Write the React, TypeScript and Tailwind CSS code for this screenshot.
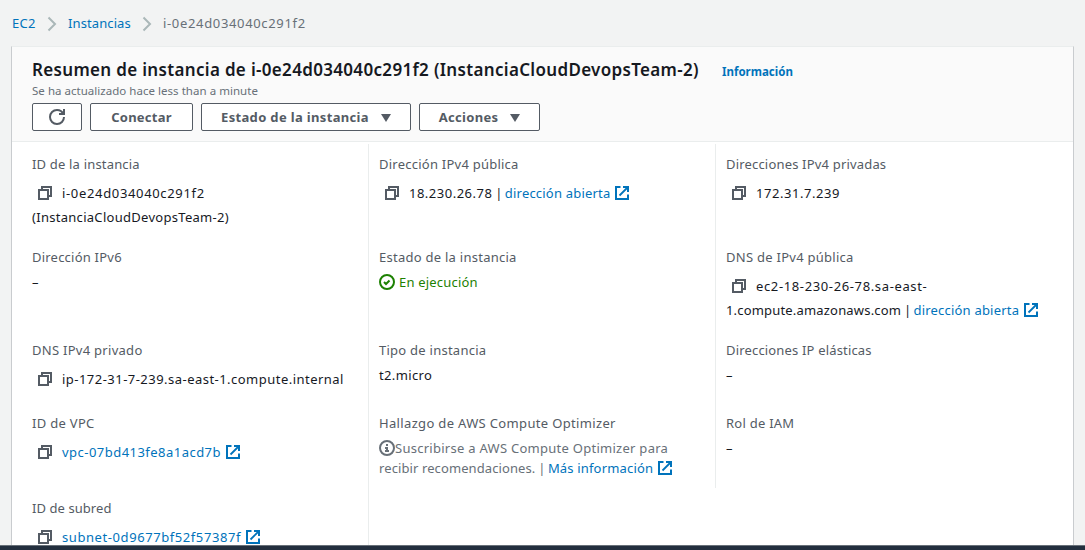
import type { ReactNode } from "react";

function CopyIcon() {
  return (
    <svg viewBox="0 0 16 16" className="ml-[5px] mr-[9px] inline-block size-4 align-[-3px]" fill="none" stroke="#545b64" strokeWidth="2">
      <path d="M2 5h9v9H2z" />
      <path d="M5 5V2h9v9h-3" />
    </svg>
  );
}

function ExternalIcon() {
  return (
    <svg viewBox="0 0 16 16" className="ml-1 inline-block size-4 align-[-3px]" fill="none" stroke="#0073bb" strokeWidth="2">
      <path d="M9 2h5v5" />
      <path d="M5.500 10.500L14 2" strokeWidth="1.800" />
      <path d="M14 9.500V14H2V2h4.500" />
    </svg>
  );
}

function Chevron() {
  return (
    <svg viewBox="0 0 10 16" className="h-4 w-2.5" fill="none" stroke="#aab7b8" strokeWidth="2">
      <path d="M1.5 1.5L8 8l-6.500 6.500" />
    </svg>
  );
}

function Caret() {
  return (
    <svg viewBox="0 0 10 8" className="h-2 w-2.5" fill="#545b64">
      <path d="M0 0h10L5 8z" />
    </svg>
  );
}

function Pipe() {
  return <span className="tracking-[-0.5px]"> | </span>;
}

function Button({ className, children }: { className: string; children: ReactNode }) {
  return (
    <button className={`flex h-7 items-center justify-center rounded-[2px] border border-[#545b64] bg-white text-[13px] font-bold text-[#545b64] ${className}`}>
      {children}
    </button>
  );
}

function Cell({ label, labelClass, divider = true, children }: { label: string; labelClass: string; divider?: boolean; children?: ReactNode }) {
  return (
    <div className={`pl-[10px] pt-[9px] ${divider ? "border-r border-[#eaeded]" : ""}`}>
      <div className={`leading-[22px] text-[#545b64] ${labelClass}`}>{label}</div>
      {children}
    </div>
  );
}

function Lines({ children }: { children: ReactNode }) {
  return <div className="mt-[6px] leading-6">{children}</div>;
}

function Plain({ children }: { children: ReactNode }) {
  return <div className="mt-1 leading-5">{children}</div>;
}

export default function App() {
  return (
    <div className="flex h-[550px] w-[1085px] flex-col overflow-hidden bg-[#f2f3f3] font-['Noto_Sans',sans-serif] text-[13px] whitespace-nowrap text-[#16191f]">
      <nav className="flex h-[46px] shrink-0 items-center pl-3 pt-px text-[#0073bb]">
        <a className="w-[35px] tracking-[0.3px]">EC2</a>
        <Chevron />
        <a className="ml-[11px] w-[74px] tracking-[0.1px]">Instancias</a>
        <Chevron />
        <span className="ml-[11px] tracking-[0.66px] text-[#687078]">i-0e24d034040c291f2</span>
      </nav>

      <main className="ml-[11px] flex min-h-0 w-[1063px] flex-1 flex-col overflow-hidden border border-b-0 border-t-[#eaeded] border-r-[#c9cccf] border-l-[#c9cccf] bg-white">
        <header className="h-[95px] shrink-0 border-b border-[#eaeded] bg-[#fafafa] pl-5 pt-[11px]">
          <div className="flex h-6 items-center">
            <h1 className="w-[690px] text-[17px] font-semibold tracking-[0.325px]">Resumen de instancia de i-0e24d034040c291f2 (InstanciaCloudDevopsTeam-2)</h1>
            <a className="pt-1 text-[11.5px] font-bold text-[#0073bb]">Información</a>
          </div>
          <p className="text-[11.5px] leading-[18px] tracking-[0.03px] text-[#687078]">Se ha actualizado hace less than a minute</p>
          <div className="mt-[3px] flex gap-2">
            <Button className="w-[50px]">
              <svg viewBox="0 0 16 16" className="size-4" fill="none" stroke="#545b64" strokeWidth="2">
                <path d="M10 5h5V0" />
                <path d="M15 8a6.957 6.957 0 0 1-7 7 6.957 6.957 0 0 1-7-7 6.957 6.957 0 0 1 7-7 6.870 6.870 0 0 1 6.300 4" />
              </svg>
            </Button>
            <Button className="w-[103px] pt-px tracking-[0.25px]">Conectar</Button>
            <Button className="w-[210px] gap-3 pt-px tracking-[0.34px]">Estado de la instancia<Caret /></Button>
            <Button className="w-[121px] gap-3 pt-px tracking-[0.3px]">Acciones<Caret /></Button>
          </div>
        </header>

        <section className="mt-0.5 grid shrink-0 grid-cols-[347px_347px_1fr] grid-rows-[93px_93px_73px_85px_93px] pl-[10px]">
          <Cell label="ID de la instancia" labelClass="tracking-[0.18px]">
            <Lines>
              <CopyIcon /><span className="tracking-[0.66px]">i-0e24d034040c291f2</span>
              <div className="tracking-[0.29px]">(InstanciaCloudDevopsTeam-2)</div>
            </Lines>
          </Cell>
          <Cell label="Dirección IPv4 pública" labelClass="tracking-[0.24px]">
            <Lines>
              <CopyIcon /><span className="tracking-[0.5px]">18.230.26.78</span><Pipe />
              <a className="tracking-[0.2px] text-[#0073bb]">dirección abierta<ExternalIcon /></a>
            </Lines>
          </Cell>
          <Cell label="Direcciones IPv4 privadas" labelClass="tracking-[0.18px]" divider={false}>
            <Lines><CopyIcon /><span className="tracking-[0.55px]">172.31.7.239</span></Lines>
          </Cell>

          <Cell label="Dirección IPv6" labelClass="tracking-[0.22px]"><Plain>–</Plain></Cell>
          <Cell label="Estado de la instancia" labelClass="tracking-[0.26px]">
            <div className="mt-1 flex items-center gap-1 leading-5 tracking-[0.2px] text-[#1d8102]">
              <svg viewBox="0 0 16 16" className="size-4" fill="none" stroke="currentColor" strokeWidth="2">
                <circle cx="8" cy="8" r="7" />
                <path d="M5 8l2 2 3.520-3.500" />
              </svg>
              En ejecución
            </div>
          </Cell>
          <Cell label="DNS de IPv4 pública" labelClass="tracking-[0.27px]" divider={false}>
            <Lines>
              <CopyIcon /><span className="tracking-[0.63px]">ec2-18-230-26-78.sa-east-</span>
              <div>
                <span className="tracking-[0.18px]">1.compute.amazonaws.com</span><Pipe />
                <a className="tracking-[0.2px] text-[#0073bb]">dirección abierta<ExternalIcon /></a>
              </div>
            </Lines>
          </Cell>

          <Cell label="DNS IPv4 privado" labelClass="tracking-[0.28px]">
            <Lines><CopyIcon /><span className="tracking-[0.47px]">ip-172-31-7-239.sa-east-1.compute.internal</span></Lines>
          </Cell>
          <Cell label="Tipo de instancia" labelClass="tracking-[0.25px]"><Plain><span className="tracking-[0.36px]">t2.micro</span></Plain></Cell>
          <Cell label="Direcciones IP elásticas" labelClass="tracking-[0.17px]" divider={false}><Plain>–</Plain></Cell>

          <Cell label="ID de VPC" labelClass="tracking-[0.3px]">
            <Lines><CopyIcon /><a className="tracking-[0.47px] text-[#0073bb]">vpc-07bd413fe8a1acd7b<ExternalIcon /></a></Lines>
          </Cell>
          <Cell label="Hallazgo de AWS Compute Optimizer" labelClass="tracking-[0.34px]">
            <div className="mt-1 leading-5 text-[#687078]">
              <div className="flex items-center tracking-[0.27px]">
                <svg viewBox="0 0 16 16" className="size-4" fill="none" stroke="currentColor" strokeWidth="2">
                  <circle cx="8" cy="8" r="7" />
                  <path d="M8 11V8H6M10 11H6M8 6V4" />
                </svg>
                Suscribirse a AWS Compute Optimizer para
              </div>
              <span className="tracking-[0.1px]">recibir recomendaciones.</span><Pipe />
              <a className="tracking-[0.17px] text-[#0073bb]">Más información<ExternalIcon /></a>
            </div>
          </Cell>
          <Cell label="Rol de IAM" labelClass="tracking-[0.25px]" divider={false}><Plain>–</Plain></Cell>

          <Cell label="ID de subred" labelClass="tracking-[0.07px]">
            <Lines><CopyIcon /><a className="tracking-[0.577px] text-[#0073bb]">subnet-0d9677bf52f57387f<ExternalIcon /></a></Lines>
          </Cell>
        </section>
      </main>
      <footer className="h-[5px] shrink-0 border-t border-[#687078] bg-[#232f3e]" />
    </div>
  );
}
